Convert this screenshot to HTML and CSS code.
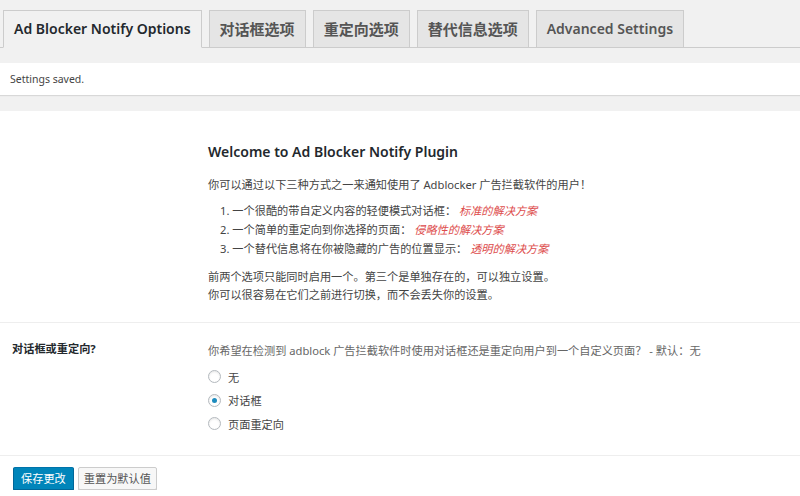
FILE: index.html
```html
<!DOCTYPE html>
<html lang="zh-CN">
<head>
    <meta charset="UTF-8">
    <title>Ad Blocker Notify Options</title>
    <link rel="stylesheet" href="styles.css">
</head>
<body>
    <div class="top">
        <nav class="tabs">
            <a class="tab latin active">Ad Blocker Notify Options</a>
            <a class="tab">对话框选项</a>
            <a class="tab">重定向选项</a>
            <a class="tab">替代信息选项</a>
            <a class="tab latin">Advanced Settings</a>
        </nav>
        <div class="notice">Settings saved.</div>
    </div>

    <div class="main">
        <div class="row intro">
            <div class="label"></div>
            <div class="field">
                <h2>Welcome to Ad Blocker Notify Plugin</h2>
                <p>你可以通过以下三种方式之一来通知使用了 Adblocker 广告拦截软件的用户！</p>
                <ol>
                    <li>一个很酷的带自定义内容的轻便模式对话框： <em>标准的解决方案</em></li>
                    <li>一个简单的重定向到你选择的页面： <em>侵略性的解决方案</em></li>
                    <li>一个替代信息将在你被隐藏的广告的位置显示： <em>透明的解决方案</em></li>
                </ol>
                <p>前两个选项只能同时启用一个。第三个是单独存在的，可以独立设置。<br>你可以很容易在它们之前进行切换，而不会丢失你的设置。</p>
            </div>
        </div>

        <div class="row option">
            <div class="label">对话框或重定向?</div>
            <div class="field">
                <p class="desc">你希望在检测到 adblock 广告拦截软件时使用对话框还是重定向用户到一个自定义页面？ - 默认：无</p>
                <label class="radio"><input type="radio" name="mode"> 无</label>
                <label class="radio"><input type="radio" name="mode" checked> 对话框</label>
                <label class="radio"><input type="radio" name="mode"> 页面重定向</label>
            </div>
        </div>

        <div class="actions">
            <button class="btn primary">保存更改</button>
            <button class="btn">重置为默认值</button>
        </div>
    </div>
</body>
</html>
```

FILE: styles.css
```css
* {
    margin: 0;
    padding: 0;
    box-sizing: border-box;
}

body {
    background-color: #fff;
    color: #444;
    font-family: "Noto Sans", "Noto Sans CJK SC", sans-serif;
    font-size: 11.2px;
}

.top {
    background-color: #f1f1f1;
    padding-top: 10px;
    padding-bottom: 16px;
}

.tabs {
    display: flex;
    gap: 7px;
    padding-left: 3px;
    border-bottom: 1px solid #ccc;
}

.tab {
    display: block;
    margin-bottom: -1px;
    padding: 7px 10px;
    line-height: 22px;
    font-size: 15px;
    font-weight: 600;
    color: #555;
    background-color: #e5e5e5;
    border: 1px solid #ccc;
    white-space: nowrap;
}

.tab.latin {
    font-size: 14px;
}

.tab.active {
    color: #23282d;
    background-color: #f1f1f1;
    border-bottom-color: #f1f1f1;
}

.notice {
    margin-top: 15px;
    height: 32px;
    line-height: 32px;
    padding: 0 10px;
    background-color: #fff;
    box-shadow: 0 1px 1px rgba(0, 0, 0, 0.1);
    color: #444;
    font-size: 10.5px;
}

.main {
    background-color: #fff;
}

.row {
    display: grid;
    grid-template-columns: 208px 1fr;
}

.row .label {
    padding-left: 12px;
    font-weight: 700;
    color: #23282d;
    line-height: 18px;
}

.intro {
    padding-top: 31px;
    padding-bottom: 18px;
}

.intro h2 {
    font-size: 14px;
    font-weight: 600;
    line-height: 20px;
    color: #23282d;
    margin-bottom: 14px;
}

.intro p {
    line-height: 18px;
}

.intro ol {
    margin: 7px 0 10px 12px;
    padding-left: 0;
    list-style-position: inside;
}

.intro li {
    line-height: 19px;
}

.intro em {
    color: #dd4b4b;
}

.option {
    border-top: 1px solid #eee;
    border-bottom: 1px solid #eee;
    padding-top: 17px;
    padding-bottom: 19px;
}

.desc {
    color: #666;
    line-height: 18px;
    margin-top: 2px;
    margin-bottom: 5px;
}

.radio {
    display: flex;
    align-items: center;
    gap: 7px;
    height: 23.5px;
    color: #444;
}

.radio input {
    appearance: none;
    width: 13px;
    height: 13px;
    margin-left: 0;
    border: 1px solid #b4b9be;
    border-radius: 50%;
    background-color: #fff;
    box-shadow: inset 0 1px 2px rgba(0, 0, 0, 0.1);
    display: flex;
    align-items: center;
    justify-content: center;
}

.radio input:checked::after {
    content: "";
    width: 5px;
    height: 5px;
    border-radius: 50%;
    background-color: #1e8cbe;
}

.actions {
    display: flex;
    gap: 4px;
    padding: 11px 0 0 13px;
}

.btn {
    height: 23px;
    padding: 0 5px;
    font-family: inherit;
    font-size: 11.2px;
    color: #555;
    background-color: #f7f7f7;
    border: 1px solid #ccc;
    border-radius: 2px;
    box-shadow: 0 1px 0 #ccc;
}

.btn.primary {
    color: #fff;
    background-color: #0085ba;
    border-color: #0073aa #006799 #006799;
    box-shadow: 0 1px 0 #006799;
    padding: 0 7px;
}
```
